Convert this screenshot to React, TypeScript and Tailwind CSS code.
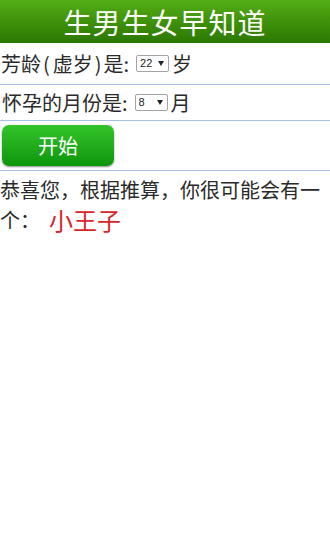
import React, { useState } from "react";

const font = { fontFamily: '"Noto Sans CJK SC", "Noto Sans", sans-serif' };

function SmallSelect({
  value,
  options,
  onChange,
}: {
  value: string;
  options: string[];
  onChange: (v: string) => void;
}) {
  return (
    <div className="relative ml-[7px] mr-[3px] flex h-[17px] w-[33px] shrink-0">
      <select
        value={value}
        onChange={(e) => onChange(e.target.value)}
        className="block h-[17px] w-[33px] appearance-none rounded-[2px] border border-[#a4a4a4] bg-white py-0 pl-[3px] text-[11px] leading-[15px] text-[#222] focus:outline-none"
        style={{ fontFamily: '"Liberation Sans", Arial, sans-serif' }}
      >
        {options.map((o) => (
          <option key={o} value={o}>
            {o}
          </option>
        ))}
      </select>
      <svg
        className="pointer-events-none absolute right-[5px] top-[6px]"
        width="6"
        height="5"
        viewBox="0 0 6 5"
      >
        <path d="M0 0h6L3 5z" fill="#222" />
      </svg>
    </div>
  );
}

export default function App() {
  const [age, setAge] = useState("22");
  const [month, setMonth] = useState("8");

  const ages = Array.from({ length: 28 }, (_, i) => String(i + 18));
  const months = Array.from({ length: 12 }, (_, i) => String(i + 1));

  return (
    <div className="min-h-[550px] w-full bg-white text-[#2a2a2a]" style={font}>
      <div className="flex h-[43px] items-center justify-center bg-gradient-to-b from-[#53ae15] to-[#2b7702] text-[28px] leading-none tracking-[1px] text-white">
        生男生女早知道
      </div>

      <div className="flex h-[42px] items-center border-b border-[#a9bfdf] pl-[1px] text-[20px] leading-none">
        <span>芳龄</span>
        <span className="ml-[2px]">(</span>
        <span className="ml-[3px]">虚岁</span>
        <span className="ml-[2px]">)</span>
        <span className="ml-[2px]">是:</span>
        <SmallSelect value={age} options={ages} onChange={setAge} />
        <span>岁</span>
      </div>

      <div className="flex h-[36px] items-center border-b border-[#a9bfdf] pl-[2px] text-[20px] leading-none">
        <span>怀孕的月份是:</span>
        <SmallSelect value={month} options={months} onChange={setMonth} />
        <span>月</span>
      </div>

      <div className="flex h-[50px] items-start border-b border-[#a9bfdf] pl-[2px] pt-[4px]">
        <button
          type="button"
          className="h-[41px] w-[112px] rounded-[7px] bg-gradient-to-b from-[#33c42a] to-[#0a960a] text-[20px] text-white shadow-[0_1px_2px_rgba(0,0,0,0.45)]"
        >
          开始
        </button>
      </div>

      <div className="pt-[6px] text-[20px]">
        <p className="leading-[26px]">恭喜您，根据推算，你很可能会有一</p>
        <p className="mt-[3px] flex h-[28px] items-center leading-[26px]">
          <span>个：</span>
          <span className="ml-[9px] text-[24px] leading-[26px] text-[#d6262b]">小王子</span>
        </p>
      </div>
    </div>
  );
}
